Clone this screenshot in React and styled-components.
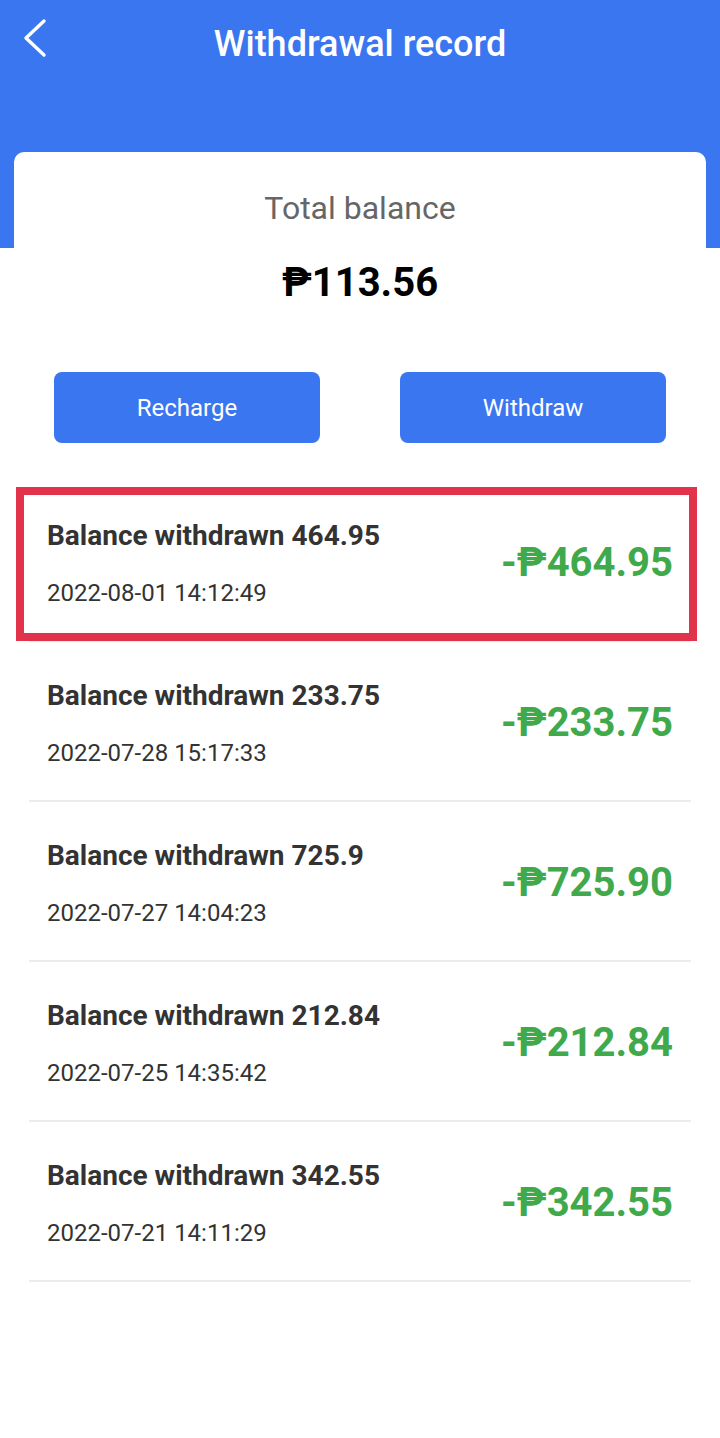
import styled, { createGlobalStyle } from "styled-components";

const records = [
  { id: 1, amount: "464.95", shown: "464.95", time: "2022-08-01 14:12:49" },
  { id: 2, amount: "233.75", shown: "233.75", time: "2022-07-28 15:17:33" },
  { id: 3, amount: "725.9", shown: "725.90", time: "2022-07-27 14:04:23" },
  { id: 4, amount: "212.84", shown: "212.84", time: "2022-07-25 14:35:42" },
  { id: 5, amount: "342.55", shown: "342.55", time: "2022-07-21 14:11:29" },
];

function App() {
  return (
    <>
      <GlobalStyle />
      <Page>
        <Top>
          <NavBar>
            <BackButton aria-label="back">
              <svg width="28" height="44" viewBox="0 0 28 44" fill="none">
                <path
                  d="M22 4 L4 21 L22 38"
                  stroke="#fff"
                  strokeWidth="3.4"
                  strokeLinecap="round"
                  strokeLinejoin="round"
                />
              </svg>
            </BackButton>
            <Title>Withdrawal record</Title>
          </NavBar>
          <Card>
            <Label>Total balance</Label>
            <Balance>₱113.56</Balance>
            <Actions>
              <ActionButton>Recharge</ActionButton>
              <ActionButton>Withdraw</ActionButton>
            </Actions>
          </Card>
        </Top>
        <List>
          {records.map((r, i) => (
            <Row key={r.id}>
              <Info>
                <RowTitle>Balance withdrawn {r.amount}</RowTitle>
                <RowDate>{r.time}</RowDate>
              </Info>
              <Amount>-₱{r.shown}</Amount>
              {i === 0 && <Highlight />}
            </Row>
          ))}
        </List>
      </Page>
    </>
  );
}

const GlobalStyle = createGlobalStyle`
  html, body {
    margin: 0;
    padding: 0;
    background: #fff;
  }
  body {
    font-family: Roboto, "Noto Sans", "Liberation Sans", sans-serif;
  }
`;

const Page = styled.div`
  width: 720px;
  min-height: 1438px;
  background: #fff;
`;

const Top = styled.div`
  background: linear-gradient(to bottom, #3a76ef 0, #3a76ef 248px, #fff 248px);
`;

const NavBar = styled.div`
  position: relative;
  height: 88px;
  display: flex;
  align-items: center;
  justify-content: center;
`;

const BackButton = styled.button`
  position: absolute;
  left: 22px;
  top: 17px;
  padding: 0;
  border: 0;
  background: none;
  display: flex;
`;

const Title = styled.h1`
  margin: 0;
  color: #fff;
  font-size: 36px;
  font-weight: 500;
  line-height: 40px;
`;

const Card = styled.div`
  margin: 64px 14px 0;
  padding: 36px 40px 0;
  background: #fff;
  border-radius: 10px 10px 0 0;
  text-align: center;
`;

const Label = styled.div`
  color: #666;
  font-size: 32px;
  line-height: 40px;
`;

const Balance = styled.div`
  margin-top: 30px;
  color: #000;
  font-size: 40px;
  font-weight: 700;
  line-height: 50px;
`;

const Actions = styled.div`
  margin-top: 64px;
  display: grid;
  grid-template-columns: 1fr 1fr;
  gap: 80px;
`;

const ActionButton = styled.button`
  height: 71px;
  border: 0;
  border-radius: 8px;
  background: #3a76ef;
  color: #fff;
  font-family: inherit;
  font-size: 24px;
`;

const List = styled.div`
  margin: 39px 29px 0;
`;

const Row = styled.div`
  position: relative;
  height: 160px;
  box-sizing: border-box;
  display: flex;
  align-items: center;
  justify-content: space-between;
  padding: 0 18px;
  border-bottom: 2px solid #ebebeb;
`;

const Info = styled.div`
  display: flex;
  flex-direction: column;
  gap: 23px;
  margin-top: 7px;
`;

const RowTitle = styled.div`
  color: #333;
  font-size: 28px;
  font-weight: 700;
  line-height: 34px;
`;

const RowDate = styled.div`
  color: #333;
  font-size: 24px;
  line-height: 34px;
`;

const Amount = styled.div`
  margin-top: 2px;
  color: #40a94c;
  font-size: 40px;
  font-weight: 700;
`;

const Highlight = styled.div`
  position: absolute;
  left: -13px;
  right: -6px;
  top: 5px;
  bottom: -1px;
  border: 8px solid #e1344a;
  pointer-events: none;
`;

export default App;
